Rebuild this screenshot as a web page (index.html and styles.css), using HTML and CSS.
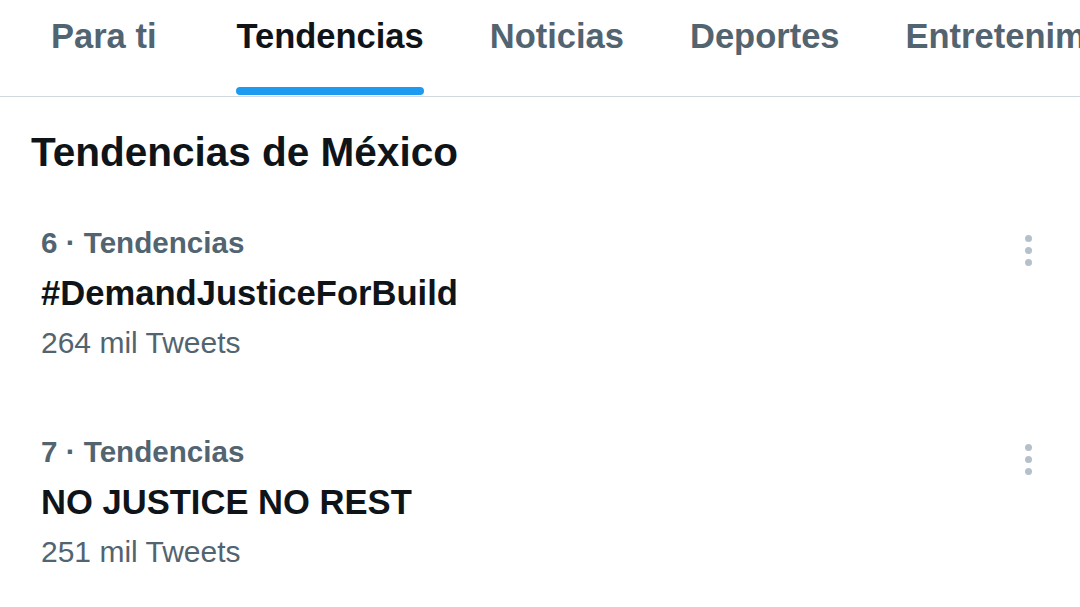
FILE: index.html
```html
<!DOCTYPE html>
<html lang="es">
<head>
<meta charset="UTF-8">
<meta name="viewport" content="width=device-width, initial-scale=1.0">
<title>Explorar - Tendencias</title>
<link rel="stylesheet" href="styles.css">
</head>
<body>

<nav class="tabs">
    <a class="tab">Para ti</a>
    <a class="tab active">Tendencias</a>
    <a class="tab">Noticias</a>
    <a class="tab">Deportes</a>
    <a class="tab">Entretenimiento</a>
</nav>

<h2 class="section-title">Tendencias de México</h2>

<div class="trend">
    <div class="trend-info">
        <div class="trend-meta">6 · Tendencias</div>
        <div class="trend-name">#DemandJusticeForBuild</div>
        <div class="trend-count">264 mil Tweets</div>
    </div>
    <div class="more"><span></span><span></span><span></span></div>
</div>

<div class="trend">
    <div class="trend-info">
        <div class="trend-meta">7 · Tendencias</div>
        <div class="trend-name">NO JUSTICE NO REST</div>
        <div class="trend-count">251 mil Tweets</div>
    </div>
    <div class="more"><span></span><span></span><span></span></div>
</div>

</body>
</html>
```

FILE: styles.css
```css
body {
    font-family: "Liberation Sans", Arial, sans-serif;
    margin: 0;
    padding: 0;
    background-color: #fff;
    color: #0f1419;
    overflow: hidden;
}
.tabs {
    display: flex;
    gap: 66px;
    height: 96px;
    padding-left: 51px;
    border-bottom: 1px solid #cfd9de;
    white-space: nowrap;
}
.tab {
    position: relative;
    display: flex;
    align-items: center;
    padding-bottom: 24px;
    font-size: 34.5px;
    font-weight: bold;
    color: #536471;
}
.tab:first-child {
    margin-right: 14px;
}
.tab.active {
    color: #0f1419;
}
.tab.active::after {
    content: "";
    position: absolute;
    left: 0;
    right: 0;
    bottom: 1px;
    height: 8px;
    border-radius: 4px;
    background-color: #1d9bf0;
}
.section-title {
    margin: 0;
    padding: 34px 31px 0;
    font-size: 40.5px;
    line-height: 42px;
}
.trend {
    display: flex;
    justify-content: space-between;
    padding: 45px 0 0 41px;
    height: 164px;
}
.trend-info {
    display: flex;
    flex-direction: column;
}
.trend-meta {
    font-size: 29.6px;
    font-weight: bold;
    color: #536471;
    line-height: 50px;
}
.trend-name {
    font-size: 34.6px;
    font-weight: bold;
    line-height: 50px;
}
.trend-count {
    font-size: 30px;
    color: #536471;
    line-height: 50px;
}
.more {
    display: flex;
    flex-direction: column;
    gap: 5px;
    padding: 17px 48px 0 0;
}
.more span {
    width: 7px;
    height: 7px;
    border-radius: 50%;
    background-color: #b4c1ca;
}
```
